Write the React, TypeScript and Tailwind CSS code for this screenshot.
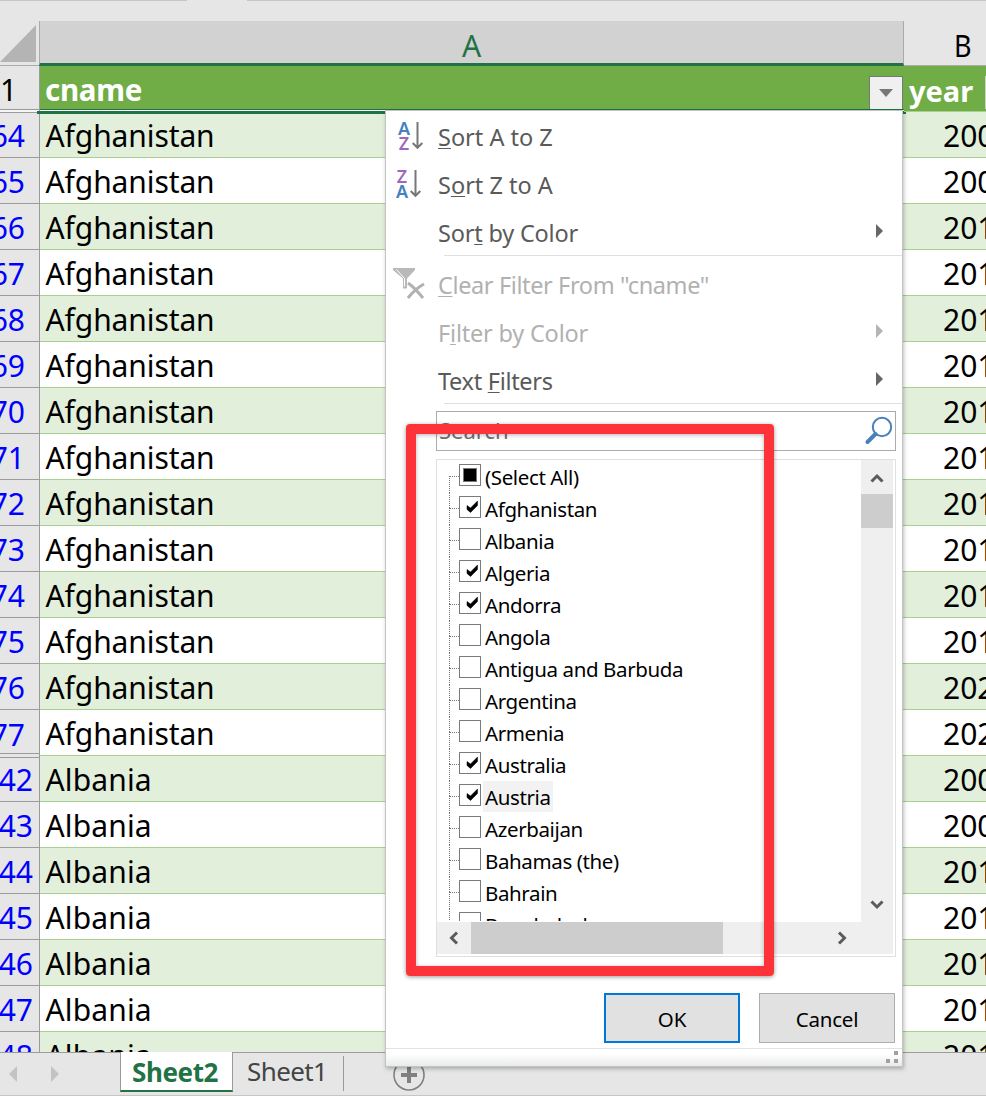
import React from "react";

const rows = [
  ["64", "Afghanistan", "2008"], ["65", "Afghanistan", "2009"], ["66", "Afghanistan", "2010"],
  ["67", "Afghanistan", "2011"], ["68", "Afghanistan", "2012"], ["69", "Afghanistan", "2013"],
  ["70", "Afghanistan", "2014"], ["71", "Afghanistan", "2015"], ["72", "Afghanistan", "2016"],
  ["73", "Afghanistan", "2017"], ["74", "Afghanistan", "2018"], ["75", "Afghanistan", "2019"],
  ["76", "Afghanistan", "2020"], ["77", "Afghanistan", "2021"], ["42", "Albania", "2008"],
  ["43", "Albania", "2009"], ["44", "Albania", "2010"], ["45", "Albania", "2011"],
  ["46", "Albania", "2012"], ["47", "Albania", "2013"], ["48", "Albania", "2014"],
];

const options: [string, "some" | "on" | "off"][] = [
  ["(Select All)", "some"], ["Afghanistan", "on"], ["Albania", "off"], ["Algeria", "on"],
  ["Andorra", "on"], ["Angola", "off"], ["Antigua and Barbuda", "off"], ["Argentina", "off"],
  ["Armenia", "off"], ["Australia", "on"], ["Austria", "on"], ["Azerbaijan", "off"],
  ["Bahamas (the)", "off"], ["Bahrain", "off"], ["Bangladesh", "off"],
];

function Row({ num, name, year, index }: { num: string; name: string; year: string; index: number }) {
  const fill = index % 2 === 0 ? "bg-[#e2efda]" : "bg-white";
  const wide = index > 13;
  return (
    <div className="flex h-[46px] shrink-0">
      <div className={`relative flex w-10 shrink-0 items-center justify-end overflow-hidden border-r border-[#9b9b9b] bg-[#e6e6e6] pt-[3px] text-[#0000ff] ${index === 13 ? "" : "border-b"} ${wide ? "pr-[6px]" : "pr-[14px]"}`}>
        <span>{num}</span>
        {index === 13 && <i className="absolute bottom-[2px] left-0 h-px w-full bg-[#9b9b9b]" />}
        {index === 14 && <i className="absolute top-px left-0 h-px w-full bg-[#9b9b9b]" />}
      </div>
      <div className={`flex w-[864px] shrink-0 items-center border-b border-[#a9d08e] pt-[3px] pl-[5.500px] ${wide ? "tracking-[0.15px]" : "tracking-[-0.1px]"} ${fill}`}>
        <span>{name}</span>
      </div>
      <div className={`flex w-[82px] shrink-0 items-center overflow-hidden border-b border-[#a9d08e] pt-[3px] pl-[39px] ${fill}`}>
        <span>{year}</span>
      </div>
    </div>
  );
}

function SortIcon({ first, second, flip }: { first: string; second: string; flip?: boolean }) {
  return (
    <span className={`flex w-[52px] shrink-0 items-center pb-[3px] ${flip ? "pl-[8px]" : "pl-[10px]"}`}>
      <span className="flex w-[16px] flex-col items-center text-[18px] leading-[15px] font-semibold">
        <span className={flip ? "text-[#a066bd]" : "text-[#4482bf]"}>{first}</span>
        <span className={flip ? "text-[#4482bf]" : "text-[#a066bd]"}>{second}</span>
      </span>
      <svg width="12" height="30" viewBox="0 0 12 30" fill="none" stroke="#777" strokeWidth="2">
        <path d="M5.500 1v26M.7 22l4.800 4.800L10.300 22" />
      </svg>
    </span>
  );
}

function MenuItem({ icon, children, arrow, disabled, spacing = "tracking-[-0.2px]" }: { icon?: React.ReactNode; children: React.ReactNode; arrow?: boolean; disabled?: boolean; spacing?: string }) {
  return (
    <div className={`flex h-12 items-center pr-[18px] text-[23.5px] ${spacing} ${disabled ? "text-[#b1b1b1]" : "text-[#5a5a5a]"}`}>
      {icon ?? <span className="w-[52px] shrink-0" />}
      <span className="grow pt-px whitespace-pre">{children}</span>
      {arrow && (
        <svg width="9" height="14" viewBox="0 0 9 14" className="mb-1"><path d="M1 0l7 7-7 7z" fill={disabled ? "#b5b5b5" : "#666"} /></svg>
      )}
    </div>
  );
}

function U({ children }: { children: React.ReactNode }) {
  return <span className="underline decoration-1 underline-offset-[2px]">{children}</span>;
}

function Chevron({ d }: { d: string }) {
  return <svg width="14" height="14" viewBox="0 0 14 14" fill="none" stroke="#5b5b5b" strokeWidth="3"><path d={d} /></svg>;
}

function Option({ label, state, first }: { label: string; state: "some" | "on" | "off"; first: boolean }) {
  return (
    <div className="flex h-8 shrink-0 pl-[12px]">
      <div className="flex w-[10px] flex-col">
        <div className={`h-[15px] shrink-0 ${first ? "" : "border-l border-dotted border-[#777]"}`} />
        <div className="grow border-t border-l border-dotted border-[#777]" />
      </div>
      <div className="mt-[3px] flex h-[22px] w-[22px] shrink-0 items-center justify-center border border-[#7a7a7a] bg-white">
        {state === "some" && <div className="h-[14px] w-[14px] border border-[#777] bg-black" />}
        {state === "on" && (
          <svg width="20" height="20" viewBox="0 0 20 20"><path d="M7 8.500l3.500 2.500L17.500 4v4.500L10.500 15.500 7 12.500z" fill="#000" stroke="#000" strokeWidth="0.500" /></svg>
        )}
      </div>
      <div className={`ml-[2px] flex h-[31px] items-center pt-[2px] pr-[2px] pl-[2px] text-[20.5px] tracking-[-0.38px] text-black ${label === "Austria" ? "bg-[#f2f2f2]" : ""}`}>
        <span className="whitespace-pre">{label}</span>
      </div>
    </div>
  );
}

function FilterMenu() {
  return (
    <div className="absolute top-[110px] left-[385px] z-20 flex h-[957px] w-[518px] flex-col border border-[#c3c3c3] bg-white shadow-[1px_2px_4px_rgba(0,0,0,0.25)]">
      <div className="mt-[2px]">
        <MenuItem spacing="tracking-[0px]" icon={<SortIcon first="A" second="Z" />}><U>S</U>ort A to Z</MenuItem>
        <MenuItem spacing="tracking-[0px]" icon={<SortIcon first="Z" second="A" flip />}>S<U>o</U>rt Z to A</MenuItem>
        <MenuItem arrow>Sor<U>t</U> by Color</MenuItem>
      </div>
      <div className="-mt-[2px] ml-[58px] h-px shrink-0 bg-[#dddfe0]" />
      <div className="mt-[5px]">
        <MenuItem
          disabled
          spacing="tracking-[-0.38px]"
          icon={
            <svg width="52" height="48" viewBox="0 0 52 48" className="shrink-0">
              <path d="M7 7h22v2l-8 8.500v10h-4v-10L7 9z" fill="#b9b9b9" />
              <path d="M10.500 8.500l8 9v8" stroke="#fff" strokeWidth="1" fill="none" />
              <path d="M22 22q7 5 15 15M38 23q-9 5-16 14" stroke="#b1b1b1" strokeWidth="3" fill="none" />
            </svg>
          }
        >
          <U>C</U>lear Filter From "cname"
        </MenuItem>
        <MenuItem arrow disabled>F<U>i</U>lter by Color</MenuItem>
        <MenuItem arrow spacing="tracking-[-0.3px]">Text <U>F</U>ilters</MenuItem>
      </div>
      <div className="-mt-[2px] ml-[58px] h-px shrink-0 bg-[#dddfe0]" />
      <div className="mt-[7px] ml-[50px] flex h-10 w-[460px] shrink-0 items-center justify-between border border-[#ababab] pr-[2px] pl-[2px]">
        <span className="pb-[3px] text-[22px] text-[#707070]">Search</span>
        <svg width="28" height="30" viewBox="0 0 28 30" fill="none" stroke="#4a81ba">
          <circle cx="17" cy="11" r="9.200" strokeWidth="2" />
          <path d="M10.500 18L2.500 26" strokeWidth="4" strokeLinecap="round" />
        </svg>
      </div>
      <div className="mt-2 ml-[50px] flex h-[498px] w-[460px] shrink-0 flex-col border border-[#e0e0e0] pr-[2px] pb-[2px]">
        <div className="flex h-[462px] shrink-0">
          <div className="flex h-[461px] grow flex-col overflow-hidden pt-px">
            {options.map(([label, state], i) => <Option key={label} label={label} state={state} first={i === 0} />)}
          </div>
          <div className="flex w-8 shrink-0 flex-col items-center bg-[#efefef] pb-[11px]">
            <div className="flex h-[34px] shrink-0 items-center pt-[3px]"><Chevron d="M1.500 9.500L7 4l5.500 5.500" /></div>
            <div className="h-[34px] w-full shrink-0 bg-[#cdcdcd]" />
            <div className="grow" />
            <Chevron d="M1.500 4.500L7 10l5.500-5.500" />
          </div>
        </div>
        <div className="flex h-8 shrink-0 items-center bg-[#efefef]">
          <div className="flex w-[34px] justify-center"><Chevron d="M10 1.500L4.500 7l5.500 5.500" /></div>
          <div className="h-8 w-[252px] bg-[#cdcdcd]" />
          <div className="ml-[112px]"><Chevron d="M4 1.500L9.500 7 4 12.500" /></div>
        </div>
      </div>
      <div className="mt-9 flex shrink-0 justify-end gap-[19px] pr-[7px] text-[20.5px] tracking-[-0.2px] text-black">
        <button className="h-[50px] w-[136px] border-2 border-[#0078d7] bg-[#e1e1e1] pt-[3px]">OK</button>
        <button className="h-[50px] w-[136px] border border-[#adadad] bg-[#e1e1e1] pt-[3px]">Cancel</button>
      </div>
      <div className="mt-[5px] flex grow items-start justify-end border-t border-[#dfe3e8] bg-linear-to-b from-white from-30% to-[#e9eaec] pt-[2px] pr-[4px]">
        <svg width="12" height="12" viewBox="0 0 12 12" fill="#a0a0a0"><path d="M8 0h4v4h-4zM0 8h4v4h-4zM8 8h4v4h-4z" /></svg>
      </div>
    </div>
  );
}

export default function App() {
  return (
    <div className="relative flex h-[1096px] w-[986px] flex-col overflow-hidden bg-[#e6e6e6] font-['Noto_Sans',sans-serif] text-[30px] leading-none text-black">
      <div className="flex h-[21px] shrink-0 justify-between">
        <div className="h-px w-[187px] bg-[#c6c6c6]" />
        <div className="h-px w-[739px] bg-[#c6c6c6]" />
      </div>
      <div className="flex h-[45px] shrink-0">
        <div className="flex w-[39px] flex-col justify-end border-b border-[#ababab] pb-[3px]">
          <svg width="36" height="37" viewBox="0 0 36 37"><path d="M36 0v37H0z" fill="#b4b4b4" /></svg>
        </div>
        <div className="flex w-[865px] items-center justify-center border-r border-b-[3px] border-l border-r-[#ababab] border-b-[#217346] border-l-[#ababab] bg-[#d2d2d2] pt-[8px] text-[#217346]">A</div>
        <div className="flex w-[82px] items-center border-b border-[#ababab] pt-[5px] pl-[50px]"><span className="inline-block origin-left scale-x-90">B</span></div>
      </div>
      <div className="relative z-10 flex h-[48px] shrink-0">
        <div className="flex w-10 shrink-0 flex-col border-r border-[#9b9b9b]">
          <div className="flex h-[44px] items-center border-b border-[#9b9b9b] pt-[5px] pl-0">1</div>
          <div className="h-[3px] border-b border-[#9b9b9b] bg-[#f6f6f6]" />
        </div>
        <div className="flex w-[864px] shrink-0 flex-col">
          <div className="flex h-[44px] items-end justify-between border-b border-[#217346] bg-[#70ad47] pr-px pl-[5px]">
            <span className="pb-[5px] text-[29.500px] font-bold tracking-[-0.3px] text-white">cname</span>
            <span className="flex h-[33px] w-[34px] items-center justify-center border border-b-0 border-[#777] bg-[#f0f0f0]">
              <svg width="14" height="8" viewBox="0 0 14 8"><path d="M0 0h14L7 8z" fill="#777" /></svg>
            </span>
          </div>
          <div className="h-px bg-white" />
          <div className="-mr-[2px] -ml-[3px] h-[3px] shrink-0 bg-[#217346]" />
        </div>
        <div className="flex h-[46px] w-[82px] items-end justify-between border-b border-[#a9d08e] bg-[#70ad47] pl-[5px]">
          <span className="pb-[6px] text-[29px] font-bold text-white">year</span>
          <span className="mb-[2px] h-[33px] w-px bg-[#d0d0d0]" />
        </div>
      </div>
      <div className="-mt-[2px] flex h-[940px] shrink-0 flex-col overflow-hidden pt-0">
        {rows.map(([num, name, year], i) => <Row key={num} num={num} name={name} year={year} index={i} />)}
      </div>
      <div className="flex h-[44px] shrink-0 items-start border-t border-b border-t-[#9b9b9b] border-b-[#c6c6c6]">
        <div className="flex h-[42px] w-[120px] items-center gap-[34px] pl-[9px]">
          <svg width="8" height="16" viewBox="0 0 8 16"><path d="M8 0v16L0 8z" fill="#c3c3c3" /></svg>
          <svg width="8" height="16" viewBox="0 0 8 16"><path d="M0 0v16l8-8z" fill="#c3c3c3" /></svg>
        </div>
        <div className="-mt-px flex h-[40px] w-[113px] items-center justify-center border-r border-b-2 border-l border-r-[#9b9b9b] border-b-[#217346] border-l-[#9b9b9b] bg-white pt-px pr-[3px] text-[26px] font-bold tracking-[-0.4px] text-[#217346]">Sheet2</div>
        <div className="flex h-[39px] w-[110px] items-center pb-[3px] pl-[14px] text-[26px] tracking-[-0.6px] text-[#444]">Sheet1</div>
        <div className="mt-[3px] h-[35px] w-px bg-[#9b9b9b]" />
        <svg className="mt-[6px] ml-[49px]" width="32" height="32" viewBox="0 0 32 32" fill="none" stroke="#808080">
          <circle cx="16" cy="16" r="15" strokeWidth="1.600" />
          <path d="M16 8v16M8 16h16" strokeWidth="4" />
        </svg>
      </div>
      <FilterMenu />
      <div className="absolute top-[424px] left-[406px] z-30 h-[552px] w-[368px] rounded-[4px] border-[10px] border-[#fe333a] shadow-[0_1px_4px_rgba(0,0,0,0.4),inset_0_1px_4px_rgba(0,0,0,0.3)]" />
    </div>
  );
}
